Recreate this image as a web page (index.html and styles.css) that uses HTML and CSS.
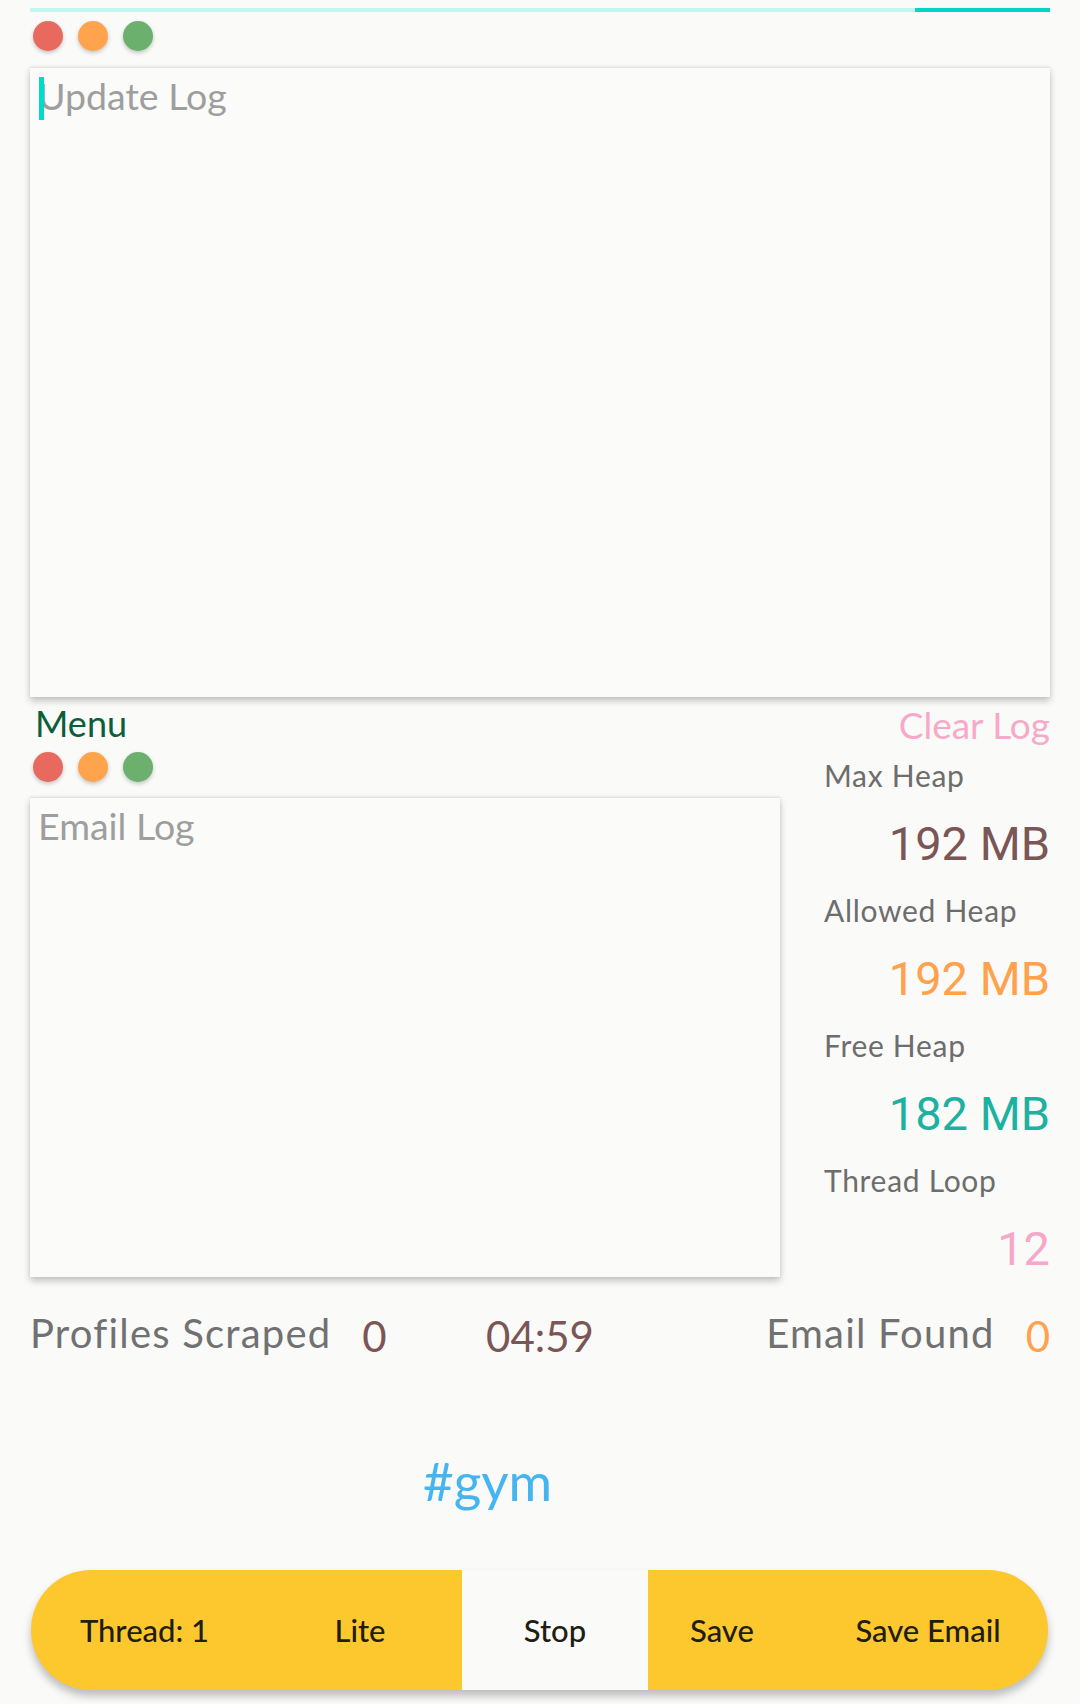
FILE: index.html
```html
<!DOCTYPE html>
<html>
<head>
<meta charset="utf-8">
<link rel="stylesheet" href="styles.css">
</head>
<body>
<div class="screen">
  <div class="progress"><div class="progress-fill" style="width: 13.2%"></div></div>
  <div class="dots">
    <span class="dot dot-red"></span>
    <span class="dot dot-orange"></span>
    <span class="dot dot-green"></span>
  </div>
  <div class="card update-card">
    <span class="caret"></span>
    <div class="hint">Update Log</div>
  </div>
  <div class="mid">
    <div class="left-col">
      <div class="menu-title">Menu</div>
      <div class="dots dots-menu">
        <span class="dot dot-red"></span>
        <span class="dot dot-orange"></span>
        <span class="dot dot-green"></span>
      </div>
      <div class="card email-card">
        <div class="hint">Email Log</div>
      </div>
    </div>
    <div class="right-col">
      <div class="clear-log">Clear Log</div>
      <div class="stats">
        <div class="stat">
          <div class="stat-label">Max Heap</div>
          <div class="stat-value v-brown">192 MB</div>
        </div>
        <div class="stat">
          <div class="stat-label">Allowed Heap</div>
          <div class="stat-value v-orange">192 MB</div>
        </div>
        <div class="stat">
          <div class="stat-label">Free Heap</div>
          <div class="stat-value v-teal">182 MB</div>
        </div>
        <div class="stat">
          <div class="stat-label">Thread Loop</div>
          <div class="stat-value v-pink">12</div>
        </div>
      </div>
    </div>
  </div>
  <div class="counts">
    <div class="count-group">
      <span class="count-label">Profiles Scraped</span>
      <span class="count-value v-brown">0</span>
    </div>
    <div class="timer v-brown">04:59</div>
    <div class="count-group count-right">
      <span class="count-label">Email Found</span>
      <span class="count-value v-orange">0</span>
    </div>
  </div>
  <div class="tag">#gym</div>
  <div class="toolbar">
    <div class="seg seg-thread">Thread: 1</div>
    <div class="seg seg-lite">Lite</div>
    <div class="seg seg-stop">Stop</div>
    <div class="seg seg-save">Save</div>
    <div class="seg seg-email">Save Email</div>
  </div>
</div>
</body>
</html>
```
FILE: styles.css
```css
html, body {
  margin: 0;
  padding: 0;
  background: #fafaf9;
}
body {
  font-family: "Lato", "Open Sans", sans-serif;
  width: 1080px;
  height: 1704px;
  overflow: hidden;
}
.screen {
  padding: 0 30px;
  display: flex;
  flex-direction: column;
}
.progress {
  margin-top: 8px;
  height: 4px;
  background: #c4f5ee;
  display: flex;
  justify-content: flex-end;
}
.progress-fill {
  height: 100%;
  background: #00d6c2;
}
.dots {
  display: flex;
  gap: 15px;
  margin-top: 9px;
  padding-left: 3px;
  height: 30px;
}
.dot {
  width: 30px;
  height: 30px;
  border-radius: 50%;
  box-shadow: 0 2px 4px rgba(0, 0, 0, 0.22);
}
.dot-red { background: #e86a5e; }
.dot-orange { background: #ffa34d; }
.dot-green { background: #6cb06e; }

.card {
  position: relative;
  background: #fbfbf9;
  border-top: 1px solid #e4e4e2;
  box-shadow: 0 4px 7px rgba(0, 0, 0, 0.22), 0 0 3px rgba(0, 0, 0, 0.08);
  box-sizing: border-box;
}
.update-card {
  margin-top: 16px;
  height: 630px;
}
.hint {
  font-size: 37.5px;
  line-height: 46px;
  color: #9e9e9e;
  padding: 5px 0 0 8px;
}
.caret {
  position: absolute;
  left: 9px;
  top: 9px;
  width: 5px;
  height: 43px;
  background: #00dcc8;
}
.mid {
  display: flex;
  margin-top: 5px;
}
.left-col {
  width: 750px;
  display: flex;
  flex-direction: column;
}
.menu-title {
  font-size: 36px;
  line-height: 43px;
  color: #0b5e3a;
  padding-left: 5px;
}
.dots-menu {
  margin-top: 7px;
}
.email-card {
  margin-top: 15px;
  height: 480px;
}
.right-col {
  flex: 1;
  display: flex;
  flex-direction: column;
}
.clear-log {
  font-size: 37px;
  line-height: 45px;
  color: #f7aac8;
  text-align: right;
}
.stats {
  margin-top: 10px;
  padding-left: 44px;
  display: flex;
  flex-direction: column;
  gap: 21px;
}
.stat-label {
  font-size: 30px;
  line-height: 36px;
  letter-spacing: 0.7px;
  color: #6d6d6d;
}
.stat-value {
  font-family: "Roboto", sans-serif;
  font-size: 47px;
  line-height: 54px;
  margin-top: 24px;
  text-align: right;
}
.v-brown { color: #7a5656; }
.v-orange { color: #ffa14d; }
.v-teal { color: #1cb2a2; }
.v-pink { color: #f7a8c8; }

.counts {
  margin-top: 32px;
  display: grid;
  grid-template-columns: 1fr auto 1fr;
  align-items: start;
}
.count-group {
  display: flex;
  align-items: flex-start;
  gap: 31px;
}
.count-right {
  justify-content: flex-end;
}
.count-label {
  font-size: 40px;
  line-height: 48px;
  letter-spacing: 1.2px;
  color: #717171;
}
.count-value {
  font-size: 42px;
  line-height: 50px;
  margin-top: 2px;
}
.timer {
  font-size: 42px;
  line-height: 50px;
  margin-top: 2px;
}
.tag {
  margin-top: 88px;
  font-size: 53px;
  line-height: 64px;
  color: #44b5f0;
  padding-left: 393px;
}
.toolbar {
  margin: 57px 2px 0 1px;
  height: 120px;
  border-radius: 60px;
  overflow: hidden;
  display: flex;
  background: #fdc82e;
  box-shadow: 0 6px 9px rgba(0, 0, 0, 0.25);
}
.seg {
  display: flex;
  align-items: center;
  justify-content: center;
  font-size: 31px;
  font-weight: 500;
  color: #211d12;
}
.seg-thread { width: 227px; }
.seg-lite { width: 204px; }
.seg-stop { width: 186px; background: #fafaf9; }
.seg-save { width: 148px; }
.seg-email { flex: 1; padding-left: 12px; }
```
